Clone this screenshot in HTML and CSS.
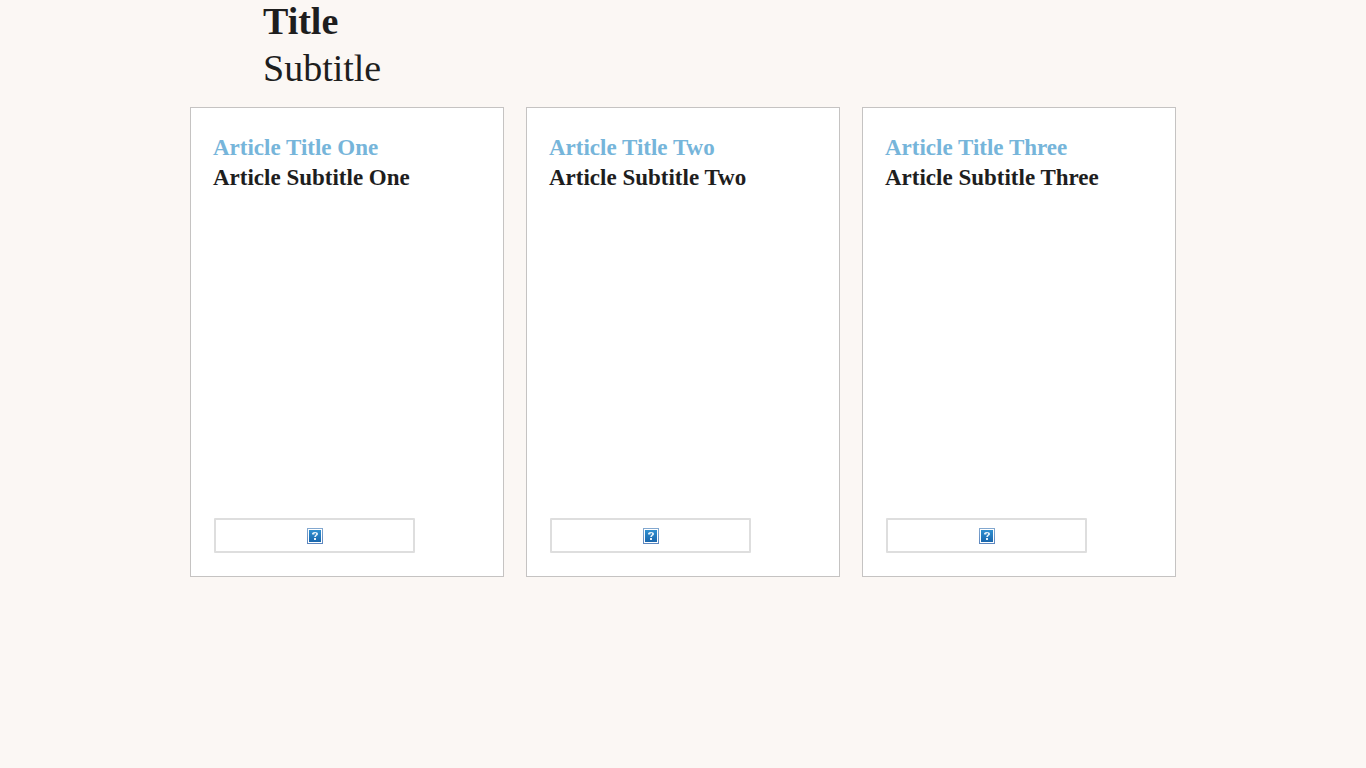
FILE: index.html
```html
<!DOCTYPE html>
<html lang="en">
<head>
<meta charset="utf-8">
<meta name="viewport" content="width=device-width, initial-scale=1">
<title>Title</title>
<link rel="stylesheet" href="styles.css">
</head>
<body>
<svg width="0" height="0" class="defs" aria-hidden="true">
  <defs>
    <linearGradient id="blue" x1="0" y1="0" x2="0" y2="1"><stop offset="0" stop-color="#2f8fd0"/><stop offset="1" stop-color="#1a67ad"/></linearGradient>
    <linearGradient id="edge" x1="0" y1="0" x2="0" y2="1"><stop offset="0" stop-color="#84a9d0"/><stop offset="1" stop-color="#5c86bf"/></linearGradient>
    <symbol id="missing" viewBox="0 0 16 16">
      <rect width="16" height="16" fill="url(#edge)"/>
      <rect x="1" y="1" width="14" height="14" fill="#fff"/>
      <rect x="2" y="2" width="12" height="12" fill="url(#blue)"/>
      <path d="M5 5.2Q6 4 8 4c2 0 3 .8 3 2.100C11 7.600 9 7.500 9 9H7.300C7.300 7.200 9 7.200 9 6c0-.7-.4-1.100-1.200-1.100L7.300 6.500H5.200z" fill="#e6f1f9"/>
      <rect x="7" y="10" width="2" height="2" fill="#e6f1f9"/>
    </symbol>
  </defs>
</svg>
<header class="masthead">
  <h1 class="title">Title</h1>
  <p class="subtitle">Subtitle</p>
</header>
<main class="cards">
  <article class="card">
    <h2 class="card-title">Article Title One</h2>
    <h3 class="card-subtitle">Article Subtitle One</h3>
    <div class="picture"><svg class="icon" role="img" aria-label="Missing image"><use href="#missing"/></svg></div>
  </article>
  <article class="card">
    <h2 class="card-title">Article Title Two</h2>
    <h3 class="card-subtitle">Article Subtitle Two</h3>
    <div class="picture"><svg class="icon" role="img" aria-label="Missing image"><use href="#missing"/></svg></div>
  </article>
  <article class="card">
    <h2 class="card-title">Article Title Three</h2>
    <h3 class="card-subtitle">Article Subtitle Three</h3>
    <div class="picture"><svg class="icon" role="img" aria-label="Missing image"><use href="#missing"/></svg></div>
  </article>
</main>
</body>
</html>
```
FILE: styles.css
```css
* { box-sizing: border-box; }
body {
  margin: 0;
  background: #fbf7f4;
  color: #1e1e1e;
  font-family: "Liberation Serif", "Times New Roman", serif;
}
.defs { position: absolute; }
.masthead {
  display: flex;
  flex-direction: column;
  gap: 4px;
  max-width: 840px;
  margin: 0 auto;
  padding-bottom: 17px;
}
.title, .subtitle {
  margin: 0;
  font-size: 38px;
  line-height: 43px;
}
.subtitle { font-weight: 400; }
.cards {
  display: grid;
  grid-template-columns: repeat(auto-fit, minmax(280px, 1fr));
  gap: 22px;
  max-width: 986px;
  margin: 0 auto;
}
.card {
  display: flex;
  flex-direction: column;
  min-height: 470px;
  padding: 25px 22px 23px;
  border: 1px solid #c5c3c2;
  background: #fff;
}
.card-title, .card-subtitle {
  margin: 0;
  font-size: 23px;
  font-weight: 700;
  line-height: 30px;
}
.card-title { color: #76b5da; }
.picture {
  display: flex;
  align-items: center;
  justify-content: center;
  width: 201px;
  height: 35px;
  margin: auto 0 0 1px;
  border: 2px solid #dedede;
  border-radius: 1px;
}
.icon { width: 16px; height: 16px; }
```
